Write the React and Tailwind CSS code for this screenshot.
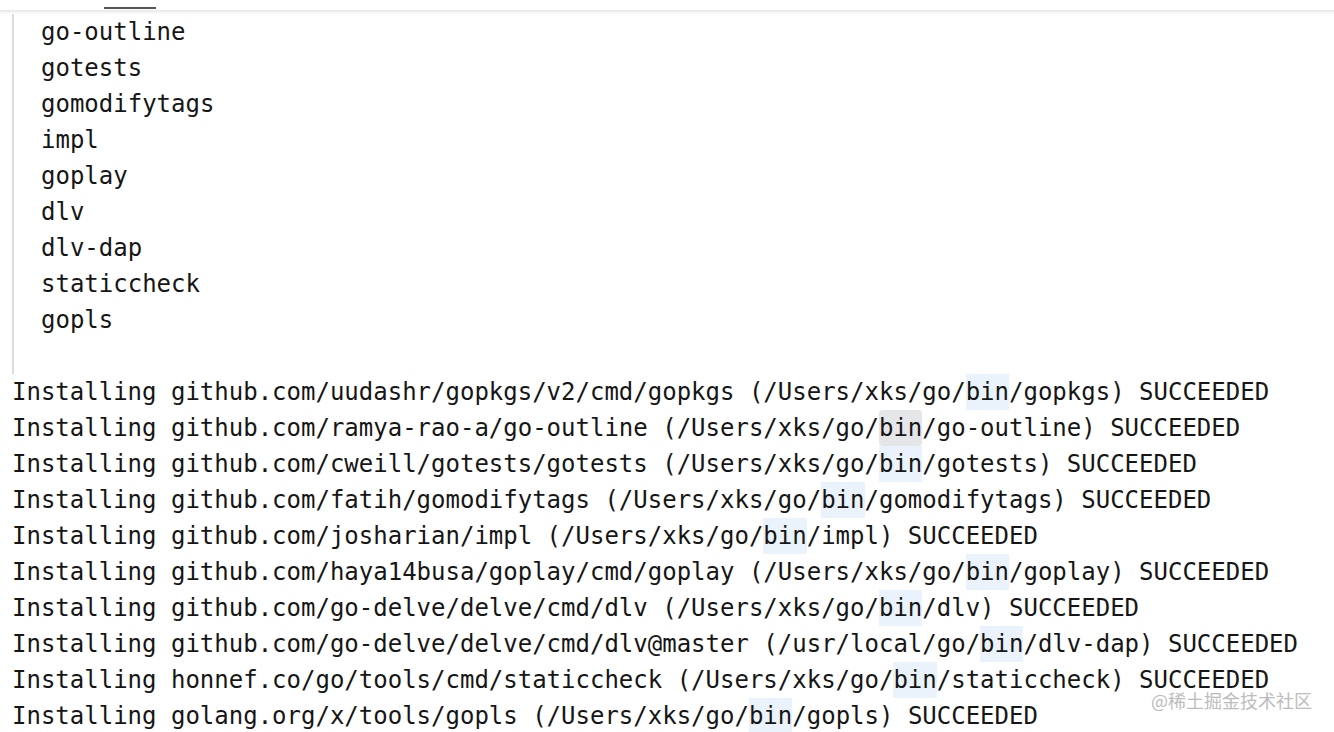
import React from "react";

const tools = ["go-outline", "gotests", "gomodifytags", "impl", "goplay", "dlv", "dlv-dap", "staticcheck", "gopls"];

const installs = [
  ["github.com/uudashr/gopkgs/v2/cmd/gopkgs (/Users/xks/go/", "gopkgs"],
  ["github.com/ramya-rao-a/go-outline (/Users/xks/go/", "go-outline", true],
  ["github.com/cweill/gotests/gotests (/Users/xks/go/", "gotests"],
  ["github.com/fatih/gomodifytags (/Users/xks/go/", "gomodifytags"],
  ["github.com/josharian/impl (/Users/xks/go/", "impl"],
  ["github.com/haya14busa/goplay/cmd/goplay (/Users/xks/go/", "goplay"],
  ["github.com/go-delve/delve/cmd/dlv (/Users/xks/go/", "dlv"],
  ["github.com/go-delve/delve/cmd/dlv@master (/usr/local/go/", "dlv-dap"],
  ["honnef.co/go/tools/cmd/staticcheck (/Users/xks/go/", "staticcheck"],
  ["golang.org/x/tools/gopls (/Users/xks/go/", "gopls"],
];

const mono = { fontFamily: '"DejaVu Sans Mono", "Liberation Mono", monospace' };

export default function App() {
  return (
    <div className="relative w-[1334px] h-[732px] overflow-hidden bg-white text-[#161616]" style={mono}>
      <div className="h-[10px] flex">
        <div className="ml-[104px] mt-[7px] w-[52px] h-[2px] bg-[#555]" />
      </div>
      <div className="h-[4px] bg-gradient-to-b from-[#e6e6e6] to-white" />

      <div className="ml-[12px] border-l-2 border-[#dcdcdc] pl-[27px] pb-[36px]">
        {tools.map((t) => (
          <div key={t} className="h-[36px] leading-[36px] text-[24px] whitespace-pre">{t}</div>
        ))}
      </div>

      <div className="pl-[12px]">
        {installs.map(([pre, name, gray], i) => (
          <div key={i} className="h-[36px] leading-[36px] text-[24px] whitespace-pre">
            {"Installing " + pre}
            <span className={gray ? "inline-block h-[36px] bg-[#e4e6e8] rounded-[4px]" : "inline-block h-[36px] bg-[#eaf3fb]"}>bin</span>
            {"/" + name + ") SUCCEEDED"}
          </div>
        ))}
      </div>

      <div
        className="absolute right-[22px] top-[688px] text-[18px] leading-[24px] text-[#bcbcbc]"
        style={{ fontFamily: '"Noto Sans CJK SC", "Noto Sans", sans-serif' }}
      >
        @稀土掘金技术社区
      </div>
    </div>
  );
}
